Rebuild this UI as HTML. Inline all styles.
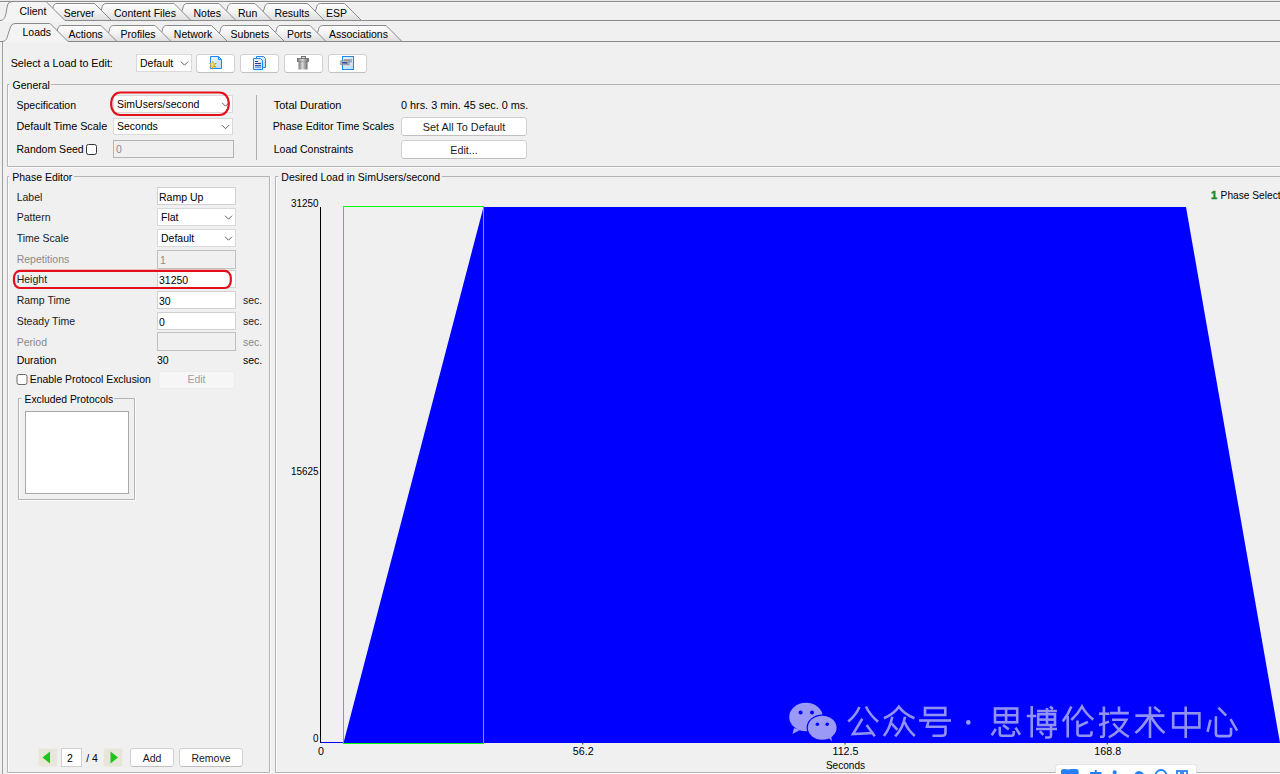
<!DOCTYPE html>
<html><head><meta charset="utf-8"><style>
html,body{margin:0;padding:0;width:1280px;height:774px;overflow:hidden;background:#f0f0f0}
svg{display:block;font-family:"Liberation Sans",sans-serif}
</style></head><body>
<svg width="1280" height="774" viewBox="0 0 1280 774">
<defs>
<linearGradient id="tg" x1="0" y1="0" x2="0" y2="1"><stop offset="0" stop-color="#fefefe"/><stop offset="0.5" stop-color="#f2f2f2"/><stop offset="1" stop-color="#dcdcdc"/></linearGradient>
</defs>
<rect x="0" y="0" width="1280" height="774" fill="#f0f0f0"/>
<line x1="0" y1="0.5" x2="1280" y2="0.5" stroke="#e6e6e6" stroke-width="1"/>
<line x1="0" y1="1.5" x2="1280" y2="1.5" stroke="#8c8c8c" stroke-width="1"/>
<line x1="0" y1="2.5" x2="1280" y2="2.5" stroke="#f6f6f6" stroke-width="1"/>
<line x1="0" y1="20.5" x2="1280" y2="20.5" stroke="#8a8a8a" stroke-width="1"/>
<path d="M311,20.5 L316.2,9.0 Q316.8,3.5 320.5,3.5 L344.5,3.5 L361.5,20.5 Z" fill="url(#tg)" stroke="#8a8a8a" stroke-width="1"/>
<path d="M259,20.5 L264.2,9.0 Q264.8,3.5 268.5,3.5 L307.5,3.5 L324.5,20.5 Z" fill="url(#tg)" stroke="#8a8a8a" stroke-width="1"/>
<path d="M222,20.5 L227.2,9.0 Q227.8,3.5 231.5,3.5 L255,3.5 L272.0,20.5 Z" fill="url(#tg)" stroke="#8a8a8a" stroke-width="1"/>
<path d="M177.5,20.5 L182.7,9.0 Q183.3,3.5 187.0,3.5 L219,3.5 L236.0,20.5 Z" fill="url(#tg)" stroke="#8a8a8a" stroke-width="1"/>
<path d="M96.5,20.5 L101.7,9.0 Q102.3,3.5 106.0,3.5 L174,3.5 L191.0,20.5 Z" fill="url(#tg)" stroke="#8a8a8a" stroke-width="1"/>
<path d="M47.5,20.5 L52.7,9.0 Q53.3,3.5 57.0,3.5 L94.5,3.5 L111.5,20.5 Z" fill="url(#tg)" stroke="#8a8a8a" stroke-width="1"/>
<text x="63.70" y="16.50" font-size="11" fill="#000000" textLength="30.94" lengthAdjust="spacingAndGlyphs">Server</text>
<text x="114.00" y="16.50" font-size="11" fill="#000000" textLength="61.89" lengthAdjust="spacingAndGlyphs">Content Files</text>
<text x="193.50" y="16.50" font-size="11" fill="#000000" textLength="27.44" lengthAdjust="spacingAndGlyphs">Notes</text>
<text x="238.00" y="16.50" font-size="11" fill="#000000" textLength="19.27" lengthAdjust="spacingAndGlyphs">Run</text>
<text x="274.40" y="16.50" font-size="11" fill="#000000" textLength="35.03" lengthAdjust="spacingAndGlyphs">Results</text>
<text x="326.00" y="16.50" font-size="11" fill="#000000" textLength="21.02" lengthAdjust="spacingAndGlyphs">ESP</text>
<path d="M0,20.5 C4,20.5 5,17.5 6,13.5 L7.5,5.0 Q8.5,1.5 12,1.5 L46,1.5 L65.0,20.5 L65.0,21.5 L0,21.5 Z" fill="#f4f4f4" stroke="none"/>
<path d="M0,20.5 C4,20.5 5,17.5 6,13.5 L7.5,5.0 Q8.5,1.5 12,1.5 L46,1.5 L65.0,20.5" fill="none" stroke="#8a8a8a" stroke-width="1"/>
<text x="19.50" y="15.00" font-size="11" fill="#000000" textLength="26.86" lengthAdjust="spacingAndGlyphs">Client</text>
<line x1="0" y1="41.5" x2="1280" y2="41.5" stroke="#8a8a8a" stroke-width="1"/>
<path d="M313,41.5 L318.2,31.0 Q318.8,25.5 322.5,25.5 L386,25.5 L402.0,41.5 Z" fill="url(#tg)" stroke="#8a8a8a" stroke-width="1"/>
<path d="M271,41.5 L276.2,31.0 Q276.8,25.5 280.5,25.5 L310,25.5 L326.0,41.5 Z" fill="url(#tg)" stroke="#8a8a8a" stroke-width="1"/>
<path d="M215,41.5 L220.2,31.0 Q220.8,25.5 224.5,25.5 L268.5,25.5 L284.5,41.5 Z" fill="url(#tg)" stroke="#8a8a8a" stroke-width="1"/>
<path d="M157,41.5 L162.2,31.0 Q162.8,25.5 166.5,25.5 L211.5,25.5 L227.5,41.5 Z" fill="url(#tg)" stroke="#8a8a8a" stroke-width="1"/>
<path d="M104,41.5 L109.2,31.0 Q109.8,25.5 113.5,25.5 L155,25.5 L171.0,41.5 Z" fill="url(#tg)" stroke="#8a8a8a" stroke-width="1"/>
<path d="M52,41.5 L57.2,31.0 Q57.8,25.5 61.5,25.5 L101,25.5 L117.0,41.5 Z" fill="url(#tg)" stroke="#8a8a8a" stroke-width="1"/>
<text x="68.40" y="37.50" font-size="11" fill="#000000" textLength="34.45" lengthAdjust="spacingAndGlyphs">Actions</text>
<text x="120.60" y="37.50" font-size="11" fill="#000000" textLength="35.03" lengthAdjust="spacingAndGlyphs">Profiles</text>
<text x="173.80" y="37.50" font-size="11" fill="#000000" textLength="38.53" lengthAdjust="spacingAndGlyphs">Network</text>
<text x="230.60" y="37.50" font-size="11" fill="#000000" textLength="38.55" lengthAdjust="spacingAndGlyphs">Subnets</text>
<text x="287.00" y="37.50" font-size="11" fill="#000000" textLength="24.52" lengthAdjust="spacingAndGlyphs">Ports</text>
<text x="329.00" y="37.50" font-size="11" fill="#000000" textLength="58.97" lengthAdjust="spacingAndGlyphs">Associations</text>
<path d="M2,41.5 C6,41.5 7,38.5 8,34.5 L10.5,27.0 Q11.5,23.5 15,23.5 L50,23.5 L68.0,41.5 L68.0,42.5 L2,42.5 Z" fill="#f4f4f4" stroke="none"/>
<path d="M2,41.5 C6,41.5 7,38.5 8,34.5 L10.5,27.0 Q11.5,23.5 15,23.5 L50,23.5 L68.0,41.5" fill="none" stroke="#8a8a8a" stroke-width="1"/>
<text x="22.50" y="36.00" font-size="11" fill="#000000" textLength="28.62" lengthAdjust="spacingAndGlyphs">Loads</text>
<line x1="2.5" y1="42" x2="2.5" y2="774" stroke="#a0a0a0" stroke-width="1"/>
<text x="10.70" y="67.00" font-size="11" fill="#000000" textLength="102.17" lengthAdjust="spacingAndGlyphs">Select a Load to Edit:</text>
<rect x="136.5" y="54.5" width="55" height="17" fill="#ffffff" stroke="#d9d9d9" rx="0" stroke-width="1" />
<text x="140.00" y="67.00" font-size="11" fill="#000000" textLength="33.29" lengthAdjust="spacingAndGlyphs">Default</text>
<path d="M181.0,61.7 L184.5,65.2 L188.0,61.7" fill="none" stroke="#606060" stroke-width="1"/>
<rect x="196.5" y="54.5" width="38" height="18" fill="#ffffff" stroke="#d0d0d0" rx="2.5" stroke-width="1" />
<line x1="198" y1="72.5" x2="233" y2="72.5" stroke="#c0c0c0" stroke-width="1"/>
<rect x="240.5" y="54.5" width="38" height="18" fill="#ffffff" stroke="#d0d0d0" rx="2.5" stroke-width="1" />
<line x1="242" y1="72.5" x2="277" y2="72.5" stroke="#c0c0c0" stroke-width="1"/>
<rect x="284.5" y="54.5" width="38" height="18" fill="#ffffff" stroke="#d0d0d0" rx="2.5" stroke-width="1" />
<line x1="286" y1="72.5" x2="321" y2="72.5" stroke="#c0c0c0" stroke-width="1"/>
<rect x="328.5" y="54.5" width="38" height="18" fill="#ffffff" stroke="#d0d0d0" rx="2.5" stroke-width="1" />
<line x1="330" y1="72.5" x2="365" y2="72.5" stroke="#c0c0c0" stroke-width="1"/>
<g>
<defs>
<linearGradient id="docg" x1="0" y1="0" x2="1" y2="1"><stop offset="0" stop-color="#eef7ff"/><stop offset="1" stop-color="#b9dcfa"/></linearGradient>
<linearGradient id="trg" x1="0" y1="0" x2="1" y2="0"><stop offset="0" stop-color="#7a7a7a"/><stop offset="0.45" stop-color="#d8d8d8"/><stop offset="1" stop-color="#6a6a6a"/></linearGradient>
<radialGradient id="starg" cx="0.45" cy="0.45" r="0.6"><stop offset="0" stop-color="#fff3a0"/><stop offset="0.5" stop-color="#d9a520"/><stop offset="1" stop-color="#8a6a10"/></radialGradient>
</defs>
<path d="M210.5,56.5 L218.5,56.5 L221.5,59.5 L221.5,68.5 L210.5,68.5 Z" fill="url(#docg)" stroke="#1f86f0" stroke-width="1"/>
<path d="M218.5,56.5 L218.5,59.5 L221.5,59.5" fill="none" stroke="#1f86f0" stroke-width="1"/>
<path d="M212.8,60.5 L213.9,63.2 L216.8,63.1 L214.7,65.1 L216.5,67.6 L213.6,67.1 L212.8,70 L211.9,67.1 L209,67.6 L210.8,65.1 L208.8,63.1 L211.7,63.2 Z" fill="url(#starg)"/>
<path d="M256.5,56.5 L263.5,56.5 L265.5,58.5 L265.5,67.5 L256.5,67.5 Z" fill="url(#docg)" stroke="#1f86f0" stroke-width="1"/>
<path d="M253.5,58.5 L260.5,58.5 L262.5,60.5 L262.5,69.5 L253.5,69.5 Z" fill="url(#docg)" stroke="#1f86f0" stroke-width="1"/>
<rect x="255" y="61" width="3" height="1" fill="#2a3f9a"/>
<rect x="255" y="63" width="6" height="1" fill="#2a3f9a"/>
<rect x="255" y="65" width="6" height="1" fill="#3a55b0"/>
<rect x="255" y="66.6" width="6" height="1" fill="#5a75c0"/>
<rect x="301.5" y="56.5" width="4" height="2" fill="#e0e0e0" stroke="#707070" stroke-width="1"/>
<rect x="297.5" y="58.5" width="11" height="3" fill="url(#trg)" stroke="#6a6a6a" stroke-width="0.8"/>
<path d="M298.5,61.5 L307.5,61.5 L307.5,69.5 L298.5,69.5 Z" fill="url(#trg)"/>
<rect x="342.5" y="56.5" width="11" height="13" fill="url(#docg)" stroke="#1f86f0" stroke-width="1"/>
<rect x="344" y="59" width="8" height="3.5" fill="#a9a9a9"/>
<circle cx="350.5" cy="60.8" r="1" fill="#6fb8ff"/>
<rect x="340.8" y="60.8" width="8.2" height="4" fill="#c8c8c8" stroke="#808080" stroke-width="0.8"/>
<rect x="342" y="62.2" width="5.5" height="1.3" fill="#1a2f9a"/>
</g>
<path d="M9.6,84.5 L7.5,84.5 L7.5,166.5 L1290,166.5 L1290,84.5 L51,84.5" fill="none" stroke="#b4b4b4" stroke-width="1"/>
<path d="M9.6,85.5 L8.5,85.5 L8.5,165.5 M1291,167.5 L1291,84.5 M7.5,167.5 L1291,167.5" fill="none" stroke="#ffffff" stroke-width="1" opacity="0.8"/>
<text x="12.60" y="88.70" font-size="11" fill="#000000" textLength="37.37" lengthAdjust="spacingAndGlyphs">General</text>
<text x="16.50" y="108.60" font-size="11" fill="#000000" textLength="59.56" lengthAdjust="spacingAndGlyphs">Specification</text>
<rect x="113.5" y="95.5" width="119" height="17" fill="#ffffff" stroke="#d9d9d9" rx="0" stroke-width="1" />
<text x="117.00" y="108.00" font-size="11" fill="#000000" textLength="82.32" lengthAdjust="spacingAndGlyphs">SimUsers/second</text>
<path d="M222.0,102.7 L225.5,106.2 L229.0,102.7" fill="none" stroke="#606060" stroke-width="1"/>
<text x="16.50" y="129.80" font-size="11" fill="#000000" textLength="90.67" lengthAdjust="spacingAndGlyphs">Default Time Scale</text>
<rect x="113.5" y="118.5" width="119" height="16" fill="#ffffff" stroke="#d9d9d9" rx="0" stroke-width="1" />
<text x="117.00" y="130.00" font-size="11" fill="#000000" textLength="40.88" lengthAdjust="spacingAndGlyphs">Seconds</text>
<path d="M222.0,125.2 L225.5,128.7 L229.0,125.2" fill="none" stroke="#606060" stroke-width="1"/>
<text x="16.50" y="153.00" font-size="11" fill="#000000" textLength="67.16" lengthAdjust="spacingAndGlyphs">Random Seed</text>
<rect x="86.5" y="144.5" width="10" height="10" fill="#ffffff" stroke="#333333" rx="2" stroke-width="1" />
<rect x="113.5" y="140.5" width="120" height="17" fill="#f0f0f0" stroke="#b4b4b4" rx="0" stroke-width="1" />
<text x="116.00" y="153.00" font-size="11" fill="#8a8a8a" textLength="5.84" lengthAdjust="spacingAndGlyphs">0</text>
<line x1="256.5" y1="95" x2="256.5" y2="160" stroke="#b0b0b0" stroke-width="1"/>
<text x="273.75" y="108.75" font-size="11" fill="#000000" textLength="67.72" lengthAdjust="spacingAndGlyphs">Total Duration</text>
<text x="401.00" y="108.75" font-size="11" fill="#000000" textLength="127.19" lengthAdjust="spacingAndGlyphs">0 hrs. 3 min. 45 sec. 0 ms.</text>
<text x="272.70" y="130.00" font-size="11" fill="#000000" textLength="121.48" lengthAdjust="spacingAndGlyphs">Phase Editor Time Scales</text>
<rect x="401.5" y="117.5" width="125" height="18" fill="#ffffff" stroke="#d0d0d0" rx="2.5" stroke-width="1" />
<line x1="403" y1="135.5" x2="525" y2="135.5" stroke="#c0c0c0" stroke-width="1"/>
<text x="422.85" y="131.00" font-size="11" fill="#1a1a1a" textLength="82.31" lengthAdjust="spacingAndGlyphs">Set All To Default</text>
<text x="273.75" y="152.80" font-size="11" fill="#000000" textLength="79.42" lengthAdjust="spacingAndGlyphs">Load Constraints</text>
<rect x="401.5" y="140.5" width="125" height="18" fill="#ffffff" stroke="#d0d0d0" rx="2.5" stroke-width="1" />
<line x1="403" y1="158.5" x2="525" y2="158.5" stroke="#c0c0c0" stroke-width="1"/>
<text x="450.32" y="154.00" font-size="11" fill="#1a1a1a" textLength="27.36" lengthAdjust="spacingAndGlyphs">Edit...</text>
<rect x="111.2" y="92.5" width="117.5" height="22.5" fill="none" stroke="#e3101c" rx="9" stroke-width="2.2" ry="10"/>
<path d="M9.2,176.5 L7.5,176.5 L7.5,772.5 L269.5,772.5 L269.5,176.5 L74,176.5" fill="none" stroke="#b4b4b4" stroke-width="1"/>
<path d="M9.2,177.5 L8.5,177.5 L8.5,771.5 M270.5,773.5 L270.5,176.5 M7.5,773.5 L270.5,773.5" fill="none" stroke="#ffffff" stroke-width="1" opacity="0.8"/>
<text x="12.20" y="181.00" font-size="11" fill="#000000" textLength="60.15" lengthAdjust="spacingAndGlyphs">Phase Editor</text>
<text x="16.70" y="200.80" font-size="11" fill="#1a1a1a" textLength="25.70" lengthAdjust="spacingAndGlyphs">Label</text>
<rect x="157.5" y="187.5" width="78" height="17" fill="#ffffff" stroke="#d0d0d0" rx="0" stroke-width="1" />
<text x="159.00" y="200.50" font-size="11" fill="#000000" textLength="44.37" lengthAdjust="spacingAndGlyphs">Ramp Up</text>
<text x="16.70" y="221.20" font-size="11" fill="#1a1a1a" textLength="33.87" lengthAdjust="spacingAndGlyphs">Pattern</text>
<rect x="157.5" y="208.5" width="78" height="17" fill="#ffffff" stroke="#d9d9d9" rx="0" stroke-width="1" />
<text x="161.00" y="221.00" font-size="11" fill="#000000" textLength="17.51" lengthAdjust="spacingAndGlyphs">Flat</text>
<path d="M225.0,215.7 L228.5,219.2 L232.0,215.7" fill="none" stroke="#606060" stroke-width="1"/>
<text x="16.70" y="241.80" font-size="11" fill="#1a1a1a" textLength="52.15" lengthAdjust="spacingAndGlyphs">Time Scale</text>
<rect x="157.5" y="229.5" width="78" height="17" fill="#ffffff" stroke="#d9d9d9" rx="0" stroke-width="1" />
<text x="161.00" y="242.00" font-size="11" fill="#000000" textLength="33.29" lengthAdjust="spacingAndGlyphs">Default</text>
<path d="M225.0,236.7 L228.5,240.2 L232.0,236.7" fill="none" stroke="#606060" stroke-width="1"/>
<text x="16.70" y="262.80" font-size="11" fill="#8a8a8a" textLength="52.56" lengthAdjust="spacingAndGlyphs">Repetitions</text>
<rect x="157.5" y="250.5" width="78" height="18" fill="#f0f0f0" stroke="#c0c0c0" rx="0" stroke-width="1" />
<text x="160.00" y="263.50" font-size="11" fill="#8a8a8a" textLength="5.84" lengthAdjust="spacingAndGlyphs">1</text>
<text x="16.70" y="283.40" font-size="11" fill="#1a1a1a" textLength="30.37" lengthAdjust="spacingAndGlyphs">Height</text>
<rect x="157.5" y="270.5" width="78" height="17" fill="#ffffff" stroke="#d0d0d0" rx="0" stroke-width="1" />
<text x="159.00" y="283.50" font-size="11" fill="#000000" textLength="29.21" lengthAdjust="spacingAndGlyphs">31250</text>
<text x="16.70" y="304.00" font-size="11" fill="#1a1a1a" textLength="53.71" lengthAdjust="spacingAndGlyphs">Ramp Time</text>
<rect x="157.5" y="291.5" width="78" height="17" fill="#ffffff" stroke="#d0d0d0" rx="0" stroke-width="1" />
<text x="159.00" y="304.50" font-size="11" fill="#000000" textLength="11.69" lengthAdjust="spacingAndGlyphs">30</text>
<text x="16.70" y="325.00" font-size="11" fill="#1a1a1a" textLength="58.39" lengthAdjust="spacingAndGlyphs">Steady Time</text>
<rect x="157.5" y="312.5" width="78" height="17" fill="#ffffff" stroke="#d0d0d0" rx="0" stroke-width="1" />
<text x="159.00" y="325.50" font-size="11" fill="#000000" textLength="5.84" lengthAdjust="spacingAndGlyphs">0</text>
<text x="16.70" y="345.70" font-size="11" fill="#8a8a8a" textLength="30.37" lengthAdjust="spacingAndGlyphs">Period</text>
<rect x="157.5" y="332.5" width="78" height="18" fill="#f0f0f0" stroke="#c0c0c0" rx="0" stroke-width="1" />
<text x="243.00" y="304.00" font-size="11" fill="#1a1a1a" textLength="19.27" lengthAdjust="spacingAndGlyphs">sec.</text>
<text x="243.00" y="325.00" font-size="11" fill="#1a1a1a" textLength="19.27" lengthAdjust="spacingAndGlyphs">sec.</text>
<text x="243.00" y="345.70" font-size="11" fill="#8a8a8a" textLength="19.27" lengthAdjust="spacingAndGlyphs">sec.</text>
<text x="16.70" y="364.00" font-size="11" fill="#000000" textLength="39.71" lengthAdjust="spacingAndGlyphs">Duration</text>
<text x="157.00" y="364.00" font-size="11" fill="#000000" textLength="11.69" lengthAdjust="spacingAndGlyphs">30</text>
<text x="243.00" y="364.00" font-size="11" fill="#000000" textLength="19.27" lengthAdjust="spacingAndGlyphs">sec.</text>
<rect x="14" y="270.8" width="216.8" height="17.2" fill="none" stroke="#e3101c" rx="6" stroke-width="2.2" ry="7"/>
<rect x="17" y="374.5" width="10" height="10" fill="#ffffff" stroke="#6a6a6a" rx="2" stroke-width="1" />
<text x="29.80" y="382.50" font-size="11" fill="#000000" textLength="120.95" lengthAdjust="spacingAndGlyphs">Enable Protocol Exclusion</text>
<rect x="158.5" y="371.5" width="76" height="17" fill="#f6f6f6" stroke="#ececec" rx="2.5" stroke-width="1" />
<text x="187.45" y="383.00" font-size="11" fill="#a0a0a0" textLength="18.10" lengthAdjust="spacingAndGlyphs">Edit</text>
<path d="M21.5,398.5 L18.5,398.5 L18.5,499.5 L134.5,499.5 L134.5,398.5 L114,398.5" fill="none" stroke="#b4b4b4" stroke-width="1"/>
<path d="M21.5,399.5 L19.5,399.5 L19.5,498.5 M135.5,500.5 L135.5,398.5 M18.5,500.5 L135.5,500.5" fill="none" stroke="#ffffff" stroke-width="1" opacity="0.8"/>
<text x="24.50" y="403.00" font-size="11" fill="#000000" textLength="88.63" lengthAdjust="spacingAndGlyphs">Excluded Protocols</text>
<rect x="25.5" y="411.5" width="103" height="82" fill="#ffffff" stroke="#a8a8a8" rx="0" stroke-width="1" />
<rect x="38.5" y="748.5" width="18.5" height="18" fill="#e8e6d8" stroke="none" rx="0" stroke-width="1" />
<path d="M42.5,757.5 L50,751.5 L50,763.5 Z" fill="#19c619"/>
<rect x="61.5" y="748.5" width="20" height="18" fill="#ffffff" stroke="#d0d0d0" rx="0" stroke-width="1" />
<text x="67.00" y="762.00" font-size="11" fill="#000000" textLength="5.84" lengthAdjust="spacingAndGlyphs">2</text>
<text x="86.20" y="762.00" font-size="11" fill="#000000" textLength="11.68" lengthAdjust="spacingAndGlyphs">/ 4</text>
<rect x="103.8" y="748.5" width="18.5" height="18" fill="#e8e6d8" stroke="none" rx="0" stroke-width="1" />
<path d="M118,757.5 L110.5,751.5 L110.5,763.5 Z" fill="#19c619"/>
<rect x="130.5" y="748.5" width="43" height="18" fill="#ffffff" stroke="#d0d0d0" rx="2.5" stroke-width="1" />
<line x1="132" y1="766.5" x2="172" y2="766.5" stroke="#c0c0c0" stroke-width="1"/>
<text x="142.65" y="762.00" font-size="11" fill="#1a1a1a" textLength="18.69" lengthAdjust="spacingAndGlyphs">Add</text>
<rect x="179.5" y="748.5" width="63" height="18" fill="#ffffff" stroke="#d0d0d0" rx="2.5" stroke-width="1" />
<line x1="181" y1="766.5" x2="241" y2="766.5" stroke="#c0c0c0" stroke-width="1"/>
<text x="191.44" y="762.00" font-size="11" fill="#1a1a1a" textLength="39.12" lengthAdjust="spacingAndGlyphs">Remove</text>
<path d="M278.3,176.5 L275.5,176.5 L275.5,772.5 L1290,772.5 L1290,176.5 L442,176.5" fill="none" stroke="#b4b4b4" stroke-width="1"/>
<path d="M278.3,177.5 L276.5,177.5 L276.5,771.5 M1291,773.5 L1291,176.5 M275.5,773.5 L1291,773.5" fill="none" stroke="#ffffff" stroke-width="1" opacity="0.8"/>
<text x="281.30" y="180.60" font-size="11" fill="#000000" textLength="158.82" lengthAdjust="spacingAndGlyphs">Desired Load in SimUsers/second</text>
<text x="1211" y="198.9" font-size="11" fill="#1e8a1e" stroke="#1e8a1e" stroke-width="0.5" font-weight="bold">1</text>
<text x="1220.60" y="198.90" font-size="11" fill="#000000" textLength="71.28" lengthAdjust="spacingAndGlyphs">Phase Selected</text>
<path d="M343.5,743 L483.5,207 L1186.0,207 L1280.0,743 Z" fill="#0000ff"/>
<line x1="320.5" y1="742.5" x2="343.5" y2="742.5" stroke="#0000ff" stroke-width="1"/>
<line x1="320.5" y1="207" x2="320.5" y2="743" stroke="#000000" stroke-width="1"/>
<rect x="343.5" y="206.5" width="140" height="537" fill="none" stroke="#00ff00" rx="0" stroke-width="1" />
<text x="318.02" y="755.00" font-size="10" fill="#000000" textLength="5.95" lengthAdjust="spacingAndGlyphs">0</text>
<line x1="582.75" y1="743" x2="582.75" y2="744.5" stroke="#303030" stroke-width="1"/>
<text x="572.84" y="755.00" font-size="10" fill="#000000" textLength="20.83" lengthAdjust="spacingAndGlyphs">56.2</text>
<line x1="845.0" y1="743" x2="845.0" y2="744.5" stroke="#303030" stroke-width="1"/>
<text x="832.51" y="755.00" font-size="10" fill="#000000" textLength="25.98" lengthAdjust="spacingAndGlyphs">112.5</text>
<line x1="1107.25" y1="743" x2="1107.25" y2="744.5" stroke="#303030" stroke-width="1"/>
<text x="1094.36" y="755.00" font-size="10" fill="#000000" textLength="26.78" lengthAdjust="spacingAndGlyphs">168.8</text>
<text x="825.89" y="768.60" font-size="10.5" fill="#000000" textLength="39.23" lengthAdjust="spacingAndGlyphs">Seconds</text>
<text x="290.97" y="206.60" font-size="10" fill="#000000" textLength="27.53" lengthAdjust="spacingAndGlyphs">31250</text>
<text x="290.97" y="475.00" font-size="10" fill="#000000" textLength="27.53" lengthAdjust="spacingAndGlyphs">15625</text>
<text x="312.99" y="741.60" font-size="10" fill="#000000" textLength="5.51" lengthAdjust="spacingAndGlyphs">0</text>
<g fill="#9a9af6">
<ellipse cx="806" cy="717" rx="16.8" ry="14.3"/>
<path d="M794,728 L792.5,734 L800,730 Z"/>
<ellipse cx="822.2" cy="727.7" rx="15.6" ry="13.1" fill="#0000ff"/>
<ellipse cx="822.2" cy="727.7" rx="14.4" ry="12"/>
<path d="M828,737 L832,741.5 L831,735 Z"/>
<circle cx="800.6" cy="712.5" r="2" fill="#0000ff"/>
<circle cx="812" cy="712.5" r="2" fill="#0000ff"/>
<circle cx="817.4" cy="724.2" r="1.8" fill="#0000ff"/>
<circle cx="827.2" cy="724.2" r="1.8" fill="#0000ff"/>
<circle cx="968.3" cy="722.4" r="2.3"/>
</g>
<g fill="none" stroke="#9292f2" stroke-width="2.6" stroke-linecap="butt" stroke-linejoin="miter">
<path d="M859.5,707 Q856,715 848.3,721.6"/>
<path d="M865.9,706.5 Q870,715 878,721.8"/>
<path d="M862.3,718.7 L853,734 L873.5,733"/>
<path d="M866.6,725 L874.8,736.3"/>
<path d="M883.9,718.2 Q894,714 898.9,706.8 Q904,714 914.4,718.2"/>
<path d="M892.3,716.7 Q890,728 883.9,736"/>
<path d="M891.4,723.3 L897.5,729.9"/>
<path d="M905,716.7 Q903,728 895.2,736.4"/>
<path d="M904.5,722 Q908,730 914.8,736"/>
<rect x="925" y="708" width="20.3" height="7"/>
<path d="M919,720.5 L951,720.5"/>
<path d="M928.5,721 L927,726.8 L945.5,726.8 L945.5,733 Q945.5,735.8 942,735.8 L932.5,735.8"/>
<rect x="995" y="708.5" width="22.2" height="13.8"/>
<path d="M1006.1,708.5 L1006.1,722.3 M995,715.2 L1017.2,715.2"/>
<path d="M995.8,729 L991.7,735.3"/>
<path d="M999.8,726.8 L999.8,733.5 Q999.8,735.7 1002,735.7 L1011.5,735.7 Q1013.8,735.7 1013.8,733 L1013.8,731"/>
<path d="M1003,725 L1008.8,729.4"/>
<path d="M1015.5,727.6 L1020,734.8"/>
<path d="M1031.7,706.1 L1031.7,737.5 M1026.8,716 L1036.2,716"/>
<path d="M1037.1,711 L1056.9,711 M1050,706.5 L1053,709"/>
<rect x="1038.2" y="714.2" width="16.8" height="10.8"/>
<path d="M1038.2,719.6 L1055,719.6"/>
<path d="M1047,708 L1047,725"/>
<path d="M1036,729 L1057,729 M1051,725 L1051,735.5 Q1051,737.5 1048.5,737.5 L1045,737.5"/>
<path d="M1039.8,731.2 L1043.4,734.8"/>
<path d="M1071.3,706.5 Q1068,715 1062.7,721.4"/>
<path d="M1067.7,716 L1067.7,737.5"/>
<path d="M1071.3,720 Q1078,714 1082,706.5 Q1086,714 1093.3,719.6"/>
<path d="M1087.9,721.8 L1078,726.5"/>
<path d="M1077.5,720.5 L1077.5,733.5 Q1077.5,735.7 1080,735.7 L1089.5,735.7 Q1091.5,735.7 1091.5,733.5 L1091.5,731.2"/>
<path d="M1099,713.7 L1109.4,713.7"/>
<path d="M1103.9,706.5 L1103.9,735 Q1103.9,736.8 1102,736.8 L1100,736.8"/>
<path d="M1099,725.2 L1109,721.6"/>
<path d="M1110,713.1 L1128.8,713.1 M1119,706.5 L1119,713.1"/>
<path d="M1112,719.8 L1126.3,719.8 Q1120,732 1108.8,737.4"/>
<path d="M1113.5,723.5 Q1120,732 1128.8,736.8"/>
<path d="M1135.4,715.6 L1164.5,715.6 M1150,706.5 L1150,738"/>
<path d="M1149.5,716 Q1143,727 1135.4,733.1 M1150.5,716 Q1157,727 1164.5,733.1"/>
<path d="M1154.2,707.1 L1160.2,711.9"/>
<rect x="1173.2" y="713.3" width="26.2" height="14.2"/>
<path d="M1185.7,706.5 L1185.7,738"/>
<path d="M1210.5,719.8 L1207.5,731.9"/>
<path d="M1215.9,716.2 L1215.9,733.5 Q1215.9,736.1 1218.5,736.1 L1228.5,736.1 Q1231,736.1 1231,733.5 L1231,727.7"/>
<path d="M1218.4,707.7 L1226.2,715.6"/>
<path d="M1230.5,719.2 L1237.1,730.7"/>
</g>
<rect x="1055.5" y="764.5" width="141" height="20" fill="#ffffff" stroke="#e4e4e4" rx="3" stroke-width="1" />
<g fill="#2680f5">
<path d="M1061,774 L1061,771 Q1061,769 1064,769 L1069,769.5 L1071,769 L1076,769 Q1078.7,769 1078.7,771.5 L1078.7,774 Z"/>
<rect x="1090" y="772" width="11.5" height="2"/>
<rect x="1094.8" y="770" width="2" height="4"/>
<circle cx="1114.7" cy="772.3" r="2"/>
<path d="M1134.4,774 Q1136,771 1139,771 Q1142,771 1143.8,774 Z"/>
</g>
<g fill="none" stroke="#2680f5" stroke-width="1.8">
<circle cx="1161" cy="775.5" r="5.5"/>
<rect x="1177" y="771" width="4" height="5"/>
<rect x="1183" y="771" width="4" height="5"/>
</g>
</svg>
</body></html>
